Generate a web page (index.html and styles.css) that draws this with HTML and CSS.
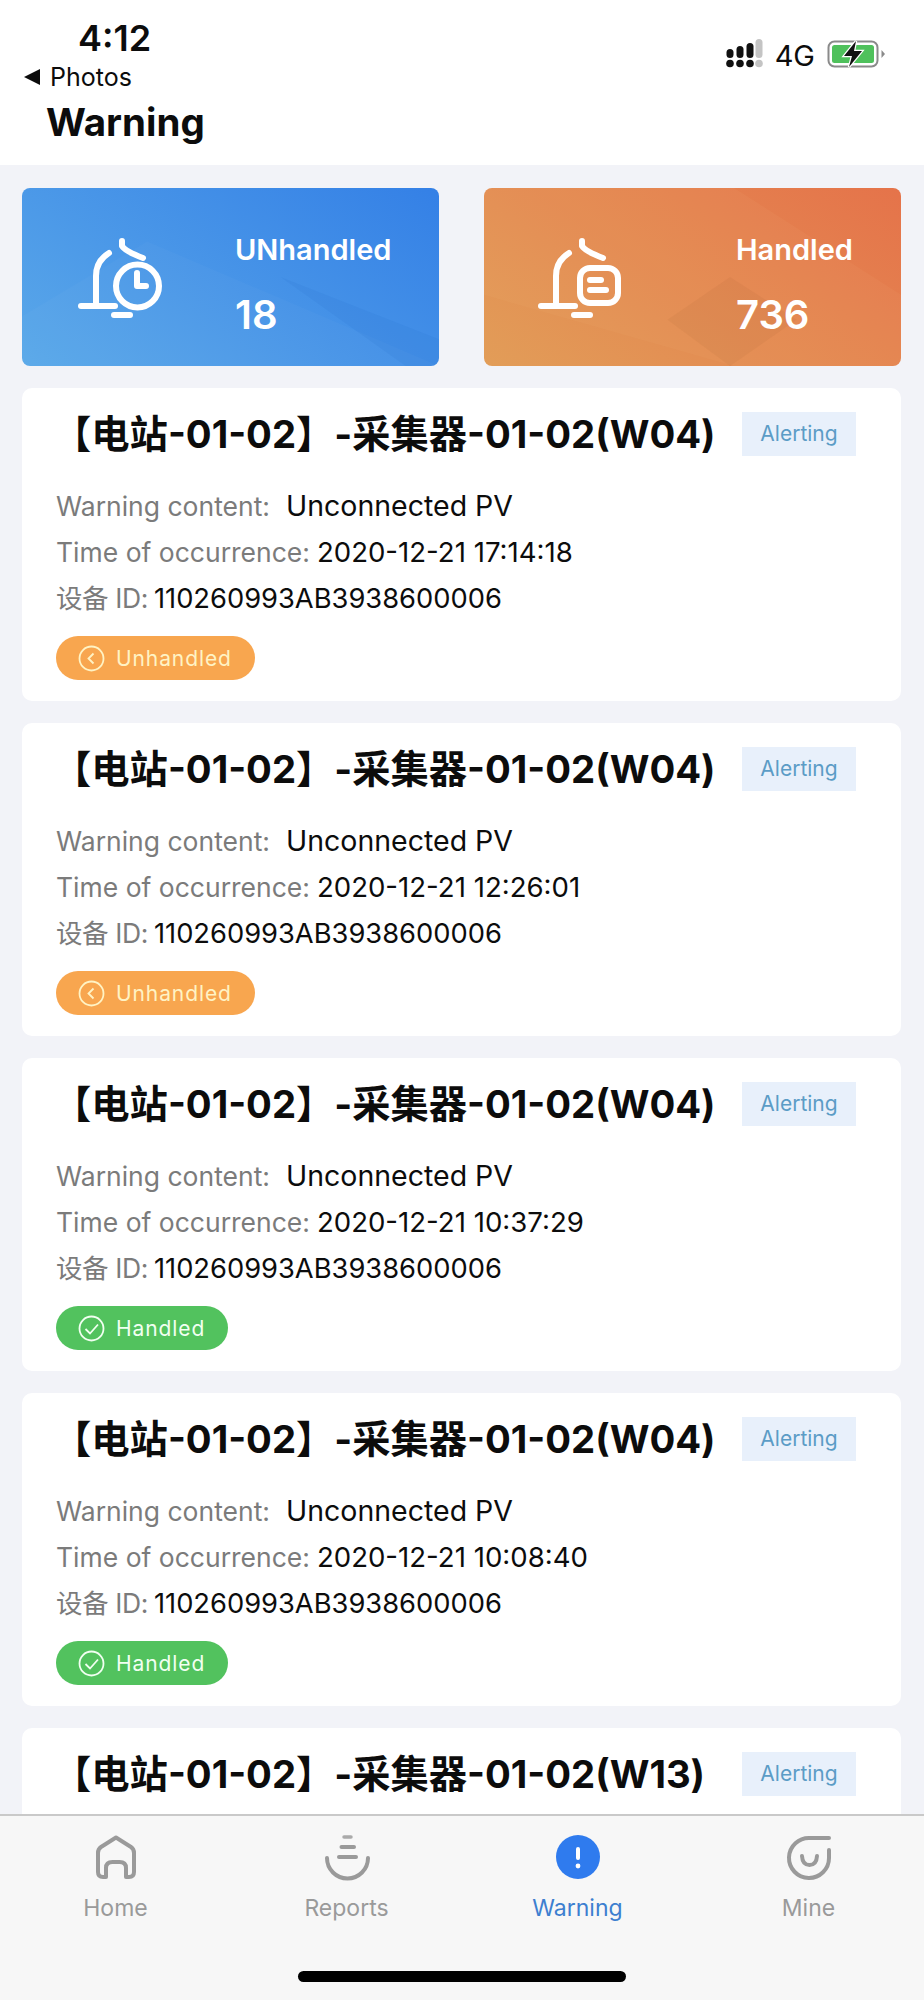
FILE: index.html
```html
<!DOCTYPE html>
<html lang="en">
    <head>
        <meta charset="UTF-8">
        <meta name="viewport" content="width=device-width, initial-scale=1.0">
        <title>Warning</title>
        <link rel="stylesheet" href="styles.css">
    </head>
    <body>
        <header class="top">
            <div class="status">
                <div class="status_left">
                    <div class="time">4:12</div>
                    <div class="back"><span class="back_arrow"></span>Photos</div>
                </div>
                <div class="status_right">
                    <svg class="signal" width="38" height="30" viewBox="0 0 38 30">
                        <circle cx="5" cy="24.500" r="3.800" fill="#111"/>
                        <circle cx="15" cy="24.500" r="3.800" fill="#111"/>
                        <circle cx="25" cy="24.500" r="3.800" fill="#111"/>
                        <circle cx="34" cy="24.500" r="3.800" fill="#c4c4c4"/>
                        <rect x="1.500" y="10" width="7" height="9" rx="3.500" fill="#111"/>
                        <rect x="11.500" y="7" width="7" height="12" rx="3.500" fill="#111"/>
                        <rect x="21.500" y="4" width="7" height="15" rx="3.500" fill="#111"/>
                        <rect x="30.500" y="0" width="7" height="19" rx="3.500" fill="#c4c4c4"/>
                    </svg>
                    <span class="net">4G</span>
                    <svg class="battery" width="60" height="28" viewBox="0 0 60 28">
                        <rect x="1.500" y="1.500" width="49" height="25" rx="6" fill="none" stroke="#8a8a8a" stroke-width="2"/>
                        <rect x="5" y="5" width="42" height="18" rx="2.500" fill="#4fc15c"/>
                        <path d="M54.500 10 L58 14 L54.500 18 Z" fill="#8a8a8a"/>
                        <path d="M29 1 L17 16 H25 L22 27 L35 11 H27 Z" fill="#111" stroke="#fff" stroke-width="2.500" paint-order="stroke"/>
                    </svg>
                </div>
            </div>
            <h1 class="page_title">Warning</h1>
        </header>

        <main class="content">
            <section class="summary">
                <div class="banner banner_blue">
                    <svg class="banner_icon" width="140" height="130" viewBox="0 0 140 130">
                        <g fill="none" stroke="#fff" stroke-width="6" stroke-linecap="round" stroke-linejoin="round">
                            <path d="M21 96 H55"/>
                            <path d="M36 94 V66 Q36 51 49 43"/>
                            <path d="M62 31 V36 Q65 41 83 48"/>
                            <path d="M54 105 H70"/>
                            <circle cx="77.500" cy="76" r="21.500"/>
                            <path d="M77 63 V76 H86"/>
                        </g>
                    </svg>
                    <div class="banner_text">
                        <div class="banner_label">UNhandled</div>
                        <div class="banner_count">18</div>
                    </div>
                </div>
                <div class="banner banner_orange">
                    <svg class="banner_icon" width="140" height="130" viewBox="0 0 140 130">
                        <g fill="none" stroke="#fff" stroke-width="6" stroke-linecap="round" stroke-linejoin="round">
                            <path d="M21 96 H55"/>
                            <path d="M36 94 V66 Q36 51 49 43"/>
                            <path d="M62 31 V36 Q65 41 83 48"/>
                            <path d="M54 105 H70"/>
                            <rect x="60" y="58" width="38" height="35" rx="10"/>
                            <path d="M70 70 H81"/>
                            <path d="M70 80 H86"/>
                        </g>
                    </svg>
                    <div class="banner_text">
                        <div class="banner_label">Handled</div>
                        <div class="banner_count">736</div>
                    </div>
                </div>
            </section>

            <article class="card">
                <div class="card_head">
                    <h2 class="card_title">【电站-01-02】-采集器-01-02(W04)</h2>
                    <span class="tag">Alerting</span>
                </div>
                <p class="row"><span class="key key_gap">Warning content:</span><span class="val val_big">Unconnected PV</span></p>
                <p class="row"><span class="key">Time of occurrence:</span><span class="val">2020-12-21 17:14:18</span></p>
                <p class="row"><span class="key key_id">设备 ID:</span><span class="val val_id">110260993AB3938600006</span></p>
                <div class="pill pill_wait">
                    <svg width="27" height="27" viewBox="0 0 27 27"><circle cx="13.500" cy="13.500" r="12" fill="none" stroke="#fff3c4" stroke-width="1.800"/><path d="M15.500 8.500 L10.500 13.500 L15.500 18.500" fill="none" stroke="#fff3c4" stroke-width="1.800"/></svg>
                    Unhandled
                </div>
            </article>

            <article class="card">
                <div class="card_head">
                    <h2 class="card_title">【电站-01-02】-采集器-01-02(W04)</h2>
                    <span class="tag">Alerting</span>
                </div>
                <p class="row"><span class="key key_gap">Warning content:</span><span class="val val_big">Unconnected PV</span></p>
                <p class="row"><span class="key">Time of occurrence:</span><span class="val">2020-12-21 12:26:01</span></p>
                <p class="row"><span class="key key_id">设备 ID:</span><span class="val val_id">110260993AB3938600006</span></p>
                <div class="pill pill_wait">
                    <svg width="27" height="27" viewBox="0 0 27 27"><circle cx="13.500" cy="13.500" r="12" fill="none" stroke="#fff3c4" stroke-width="1.800"/><path d="M15.500 8.500 L10.500 13.500 L15.500 18.500" fill="none" stroke="#fff3c4" stroke-width="1.800"/></svg>
                    Unhandled
                </div>
            </article>

            <article class="card">
                <div class="card_head">
                    <h2 class="card_title">【电站-01-02】-采集器-01-02(W04)</h2>
                    <span class="tag">Alerting</span>
                </div>
                <p class="row"><span class="key key_gap">Warning content:</span><span class="val val_big">Unconnected PV</span></p>
                <p class="row"><span class="key">Time of occurrence:</span><span class="val">2020-12-21 10:37:29</span></p>
                <p class="row"><span class="key key_id">设备 ID:</span><span class="val val_id">110260993AB3938600006</span></p>
                <div class="pill pill_done">
                    <svg width="27" height="27" viewBox="0 0 27 27"><circle cx="13.500" cy="13.500" r="12" fill="none" stroke="#f1fff1" stroke-width="1.800"/><path d="M7.500 14 L12 18.500 L20 9.500" fill="none" stroke="#f1fff1" stroke-width="1.800"/></svg>
                    Handled
                </div>
            </article>

            <article class="card">
                <div class="card_head">
                    <h2 class="card_title">【电站-01-02】-采集器-01-02(W04)</h2>
                    <span class="tag">Alerting</span>
                </div>
                <p class="row"><span class="key key_gap">Warning content:</span><span class="val val_big">Unconnected PV</span></p>
                <p class="row"><span class="key">Time of occurrence:</span><span class="val">2020-12-21 10:08:40</span></p>
                <p class="row"><span class="key key_id">设备 ID:</span><span class="val val_id">110260993AB3938600006</span></p>
                <div class="pill pill_done">
                    <svg width="27" height="27" viewBox="0 0 27 27"><circle cx="13.500" cy="13.500" r="12" fill="none" stroke="#f1fff1" stroke-width="1.800"/><path d="M7.500 14 L12 18.500 L20 9.500" fill="none" stroke="#f1fff1" stroke-width="1.800"/></svg>
                    Handled
                </div>
            </article>

            <article class="card">
                <div class="card_head">
                    <h2 class="card_title">【电站-01-02】-采集器-01-02(W13)</h2>
                    <span class="tag">Alerting</span>
                </div>
            </article>
        </main>

        <nav class="tabbar">
            <div class="tab">
                <svg width="46" height="46" viewBox="0 0 46 46" fill="none" stroke="#9a9a9a" stroke-width="4" stroke-linejoin="round" stroke-linecap="round">
                    <path d="M23 2.500 L38 12 Q41 14 41 18 V37 Q41 42 36 42 H33 V33 Q33 27 26.500 27 H19.500 Q13 27 13 33 V42 H10 Q5 42 5 37 V18 Q5 14 8 12 Z"/>
                </svg>
                <span class="tab_label">Home</span>
            </div>
            <div class="tab">
                <svg width="46" height="46" viewBox="0 0 46 46" fill="none" stroke="#9a9a9a" stroke-linecap="round">
                    <path d="M20 2 H27" stroke-width="3.500" stroke="#aaa"/>
                    <path d="M17.500 12 H30" stroke-width="4"/>
                    <path d="M15 22 H32" stroke-width="4"/>
                    <path d="M3 23 A20.500 20.500 0 0 0 44 23" stroke-width="4"/>
                </svg>
                <span class="tab_label">Reports</span>
            </div>
            <div class="tab tab_on">
                <svg width="46" height="46" viewBox="0 0 46 46">
                    <circle cx="23" cy="22" r="22" fill="#2f7bee"/>
                    <rect x="21" y="12" width="4" height="13" rx="2" fill="#fff"/>
                    <circle cx="23" cy="31" r="2.400" fill="#fff"/>
                </svg>
                <span class="tab_label">Warning</span>
            </div>
            <div class="tab">
                <svg width="46" height="46" viewBox="0 0 46 46" fill="none" stroke="#9a9a9a" stroke-width="4" stroke-linecap="round">
                    <path d="M43 3 H24 A20 20 0 1 0 43 23 V15"/>
                    <path d="M16 21 Q16.500 30 23.500 30 Q30.500 30 31 21"/>
                </svg>
                <span class="tab_label">Mine</span>
            </div>
            <div class="home_bar"></div>
        </nav>
    </body>
</html>
```

FILE: styles.css
```css
:root{
    --page:#f2f3f8;
    --black:#0c0c0c;
    --grey:#7b7b7b;
    --tabgrey:#9a9a9a;
    --blue:#3d7fd0;
}
*,*::before,*::after{
    padding: 0;
    margin: 0;
    box-sizing: border-box;
}
html{
    height:100%;
}
body{
    height: 2000px;
    display: flex;
    flex-direction: column;
    overflow: hidden;
    background-color: var(--page);
    color: var(--black);
    font-family: "Inter","Liberation Sans","Noto Sans CJK SC",sans-serif;
}

/* header */
.top{
    flex: none;
    height: 165px;
    padding: 18px 37px 0 24px;
    background-color: #fff;
}
.status{
    display: flex;
    justify-content: space-between;
    align-items: center;
}
.time{
    padding-left: 54px;
    font-size: 36px;
    line-height: 40px;
    font-weight: 600;
}
.back{
    display: flex;
    align-items: center;
    margin-top: 4px;
    font-size: 25px;
    line-height: 30px;
}
.back_arrow{
    width: 0;
    height: 0;
    margin-right: 10px;
    border-top: 8px solid transparent;
    border-bottom: 8px solid transparent;
    border-right: 16px solid var(--black);
}
.status_right{
    display: flex;
    align-items: center;
}
.signal{
    margin-top: -2px;
}
.net{
    margin: 0 12px 0 12px;
    font-size: 29px;
}
.battery{
    margin-top: -2px;
}
.page_title{
    padding-left: 22px;
    margin-top: 5px;
    font-size: 38.500px;
    line-height: 50px;
    font-weight: 700;
}

/* scrolling part */
.content{
    flex: 1;
    min-height: 0;
    overflow: hidden;
    padding: 23px 23px 0 22px;
}
.summary{
    display: grid;
    grid-template-columns: 417px 417px;
    justify-content: space-between;
    margin-bottom: 22px;
}
.banner{
    position: relative;
    display: flex;
    height: 178px;
    border-radius: 8px;
    overflow: hidden;
    color: #fff;
}
.banner::before,.banner::after{
    content: "";
    position: absolute;
    inset: 0;
}
.banner_blue{
    background-image: linear-gradient(35deg,#5aa8e9,#3480e6);
}
.banner_blue::before{
    background-color: rgba(255,255,255,0.025);
    clip-path: polygon(0 100%,0 72%,30% 30%,100% 100%);
}
.banner_blue::after{
    background-color: rgba(20,80,190,0.07);
    clip-path: polygon(62% 50%,100% 85%,100% 100%,92% 100%);
}
.banner_orange{
    background-image: linear-gradient(35deg,#e29d58,#e5734a);
}
.banner_orange::before{
    background-color: rgba(170,90,40,0.10);
    clip-path: polygon(44% 74%,59% 50%,75% 74%,59% 100%);
}
.banner_orange::after{
    background-color: rgba(255,210,160,0.05);
    clip-path: polygon(0 0,60% 0,100% 60%,100% 100%,60% 100%,0 60%);
}
.banner_icon{
    position: relative;
    z-index: 1;
    flex: none;
    margin-top: 22px;
}
.banner_blue .banner_icon{
    margin-left: 38px;
    margin-right: 35px;
}
.banner_orange .banner_icon{
    margin-left: 36px;
    margin-right: 76px;
}
.banner_text{
    position: relative;
    z-index: 1;
    padding-top: 44px;
}
.banner_label{
    font-size: 29px;
    line-height: 36px;
    font-weight: 600;
}
.banner_count{
    margin-top: 24px;
    font-size: 40px;
    line-height: 46px;
    font-weight: 600;
}

/* warning cards */
.card{
    height: 313px;
    margin-bottom: 22px;
    padding: 24px 45px 0 34px;
    background-color: #fff;
    border-radius: 10px;
}
.card_head{
    display: flex;
    justify-content: space-between;
    align-items: center;
    height: 44px;
    margin-bottom: 27px;
}
.card_title{
    margin-left: -3px;
    font-size: 38.300px;
    line-height: 44px;
    font-weight: 700;
    white-space: nowrap;
}
.tag{
    width: 114px;
    height: 44px;
    line-height: 44px;
    text-align: center;
    font-size: 21px;
    color: #5b9cc6;
    background-color: #e8f0fb;
}
.row{
    font-size: 26.500px;
    line-height: 46px;
    white-space: nowrap;
}
.key{
    color: var(--grey);
    margin-right: 7px;
}
.key_gap{
    margin-right: 16px;
}
.key_id{
    margin-right: 6px;
    letter-spacing: -0.4px;
}
.val{
    font-size: 27.600px;
}
.val_big{
    font-size: 28.500px;
}
.val_id{
    font-size: 27.300px;
}
.pill{
    display: inline-flex;
    align-items: center;
    gap: 11px;
    height: 44px;
    margin-top: 14px;
    padding: 0 23px 0 22px;
    border-radius: 22px;
    font-size: 21px;
    letter-spacing: 0.9px;
}
.pill_wait{
    background-color: #f8a64f;
    color: #fff3c4;
}
.pill_done{
    background-color: #52c25e;
    color: #f1fff1;
}

/* tab bar */
.tabbar{
    position: relative;
    flex: none;
    display: grid;
    grid-template-columns: repeat(4,231px);
    height: 186px;
    padding-top: 19px;
    background-color: #f7f7f7;
    border-top: 2px solid #c9c9c9;
}
.tab{
    display: flex;
    flex-direction: column;
    align-items: center;
    color: var(--tabgrey);
}
.tab_label{
    margin-top: 12px;
    font-size: 23px;
    line-height: 30px;
}
.tab_on{
    color: var(--blue);
}
.home_bar{
    position: absolute;
    left: 298px;
    bottom: 18px;
    width: 328px;
    height: 11px;
    border-radius: 6px;
    background-color: #000;
}
```
